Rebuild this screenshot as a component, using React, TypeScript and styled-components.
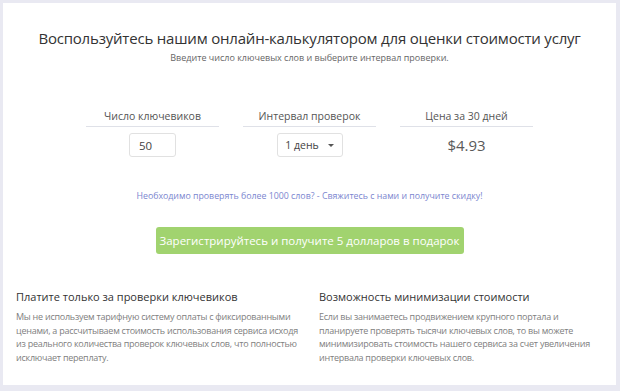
import styled, { createGlobalStyle } from 'styled-components';

const GlobalStyle = createGlobalStyle`
  html, body {
    margin: 0;
    padding: 0;
    background: #e9e9f2;
  }
  body {
    font-family: 'Open Sans', 'Noto Sans', sans-serif;
  }
`;

const columns = [
  { label: 'Число ключевиков', kind: 'input' },
  { label: 'Интервал проверок', kind: 'select' },
  { label: 'Цена за 30 дней', kind: 'price' },
];

const features = [
  {
    title: 'Платите только за проверки ключевиков',
    text: 'Мы не используем тарифную систему оплаты с фиксированными ценами, а рассчитываем стоимость использования сервиса исходя из реального количества проверок ключевых слов, что полностью исключает переплату.',
  },
  {
    title: 'Возможность минимизации стоимости',
    text: 'Если вы занимаетесь продвижением крупного портала и планируете проверять тысячи ключевых слов, то вы можете минимизировать стоимость нашего сервиса за счет увеличения интервала проверки ключевых слов.',
  },
];

const App = () => {
  return (
    <Page>
      <GlobalStyle />
      <Card>
        <Title>Воспользуйтесь нашим онлайн-калькулятором для оценки стоимости услуг</Title>
        <Subtitle>Введите число ключевых слов и выберите интервал проверки.</Subtitle>

        <Calculator>
          {columns.map((col) => (
            <Column key={col.label}>
              <Label>{col.label}</Label>
              {col.kind === 'input' && <NumberInput defaultValue="50" />}
              {col.kind === 'select' && (
                <Select>
                  1 день <Caret />
                </Select>
              )}
              {col.kind === 'price' && <Price>$4.93</Price>}
            </Column>
          ))}
        </Calculator>

        <Notice>Необходимо проверять более 1000 слов? - Свяжитесь с нами и получите скидку!</Notice>

        <ButtonRow>
          <Button>Зарегистрируйтесь и получите 5 долларов в подарок</Button>
        </ButtonRow>

        <Features>
          {features.map((f) => (
            <Feature key={f.title}>
              <FeatureTitle>{f.title}</FeatureTitle>
              <FeatureText>{f.text}</FeatureText>
            </Feature>
          ))}
        </Features>
      </Card>
    </Page>
  );
};

export default App;

const Page = styled.div`
  width: 620px;
  height: 391px;
  padding: 3px 4px 6px 3px;
  box-sizing: border-box;
`;

const Card = styled.div`
  height: 382px;
  background: #fff;
  box-sizing: border-box;
  padding: 25px 13px 0;
`;

const Title = styled.h1`
  margin: 0;
  text-align: center;
  font-size: 15px;
  letter-spacing: -0.2px;
  font-weight: 400;
  color: #333;
  line-height: 20px;
  white-space: nowrap;
`;

const Subtitle = styled.p`
  margin: 4px 0 0;
  text-align: center;
  font-size: 9px;
  color: #666;
  line-height: 12px;
`;

const Calculator = styled.div`
  display: grid;
  grid-template-columns: repeat(3, 133px);
  column-gap: 24px;
  justify-content: center;
  margin-top: 45px;
`;

const Column = styled.div`
  display: flex;
  flex-direction: column;
  align-items: center;
`;

const Label = styled.div`
  align-self: stretch;
  text-align: center;
  font-size: 10.5px;
  color: #555;
  line-height: 14px;
  padding-bottom: 3px;
  border-bottom: 1px solid #dfe1e8;
  margin-bottom: 6px;
`;

const NumberInput = styled.input`
  width: 47px;
  height: 24px;
  box-sizing: border-box;
  border: 1px solid #e1e1e1;
  border-radius: 3px;
  padding: 0 9px;
  font-family: inherit;
  font-size: 11.5px;
  color: #444;
  outline: none;
`;

const Select = styled.div`
  width: 66px;
  height: 24px;
  box-sizing: border-box;
  border: 1px solid #e1e1e1;
  border-radius: 3px;
  display: flex;
  align-items: center;
  justify-content: center;
  gap: 9px;
  font-size: 10.5px;
  color: #444;
`;

const Caret = styled.span`
  width: 0;
  height: 0;
  border-left: 3px solid transparent;
  border-right: 3px solid transparent;
  border-top: 3px solid #555;
`;

const Price = styled.div`
  height: 24px;
  line-height: 24px;
  font-size: 15px;
  color: #5a5a5a;
`;

const Notice = styled.p`
  margin: 33px 0 0;
  text-align: center;
  font-size: 8.8px;
  color: #7b86cf;
  line-height: 12px;
`;

const ButtonRow = styled.div`
  display: flex;
  justify-content: center;
  margin-top: 25px;
`;

const Button = styled.button`
  width: 308px;
  height: 27px;
  padding: 0;
  border: none;
  border-radius: 3px;
  background: #a1d36f;
  color: #fff;
  font-family: inherit;
  font-size: 11.5px;
  white-space: nowrap;
  cursor: pointer;
`;

const Features = styled.div`
  display: grid;
  grid-template-columns: 1fr 1fr;
  column-gap: 19px;
  margin-top: 35px;
`;

const Feature = styled.div``;

const FeatureTitle = styled.h3`
  margin: 0;
  font-size: 11px;
  font-weight: 400;
  color: #333;
  line-height: 16px;
`;

const FeatureText = styled.p`
  margin: 5px 0 0;
  font-size: 9px;
  letter-spacing: -0.25px;
  line-height: 13.7px;
  color: #808080;
`;
